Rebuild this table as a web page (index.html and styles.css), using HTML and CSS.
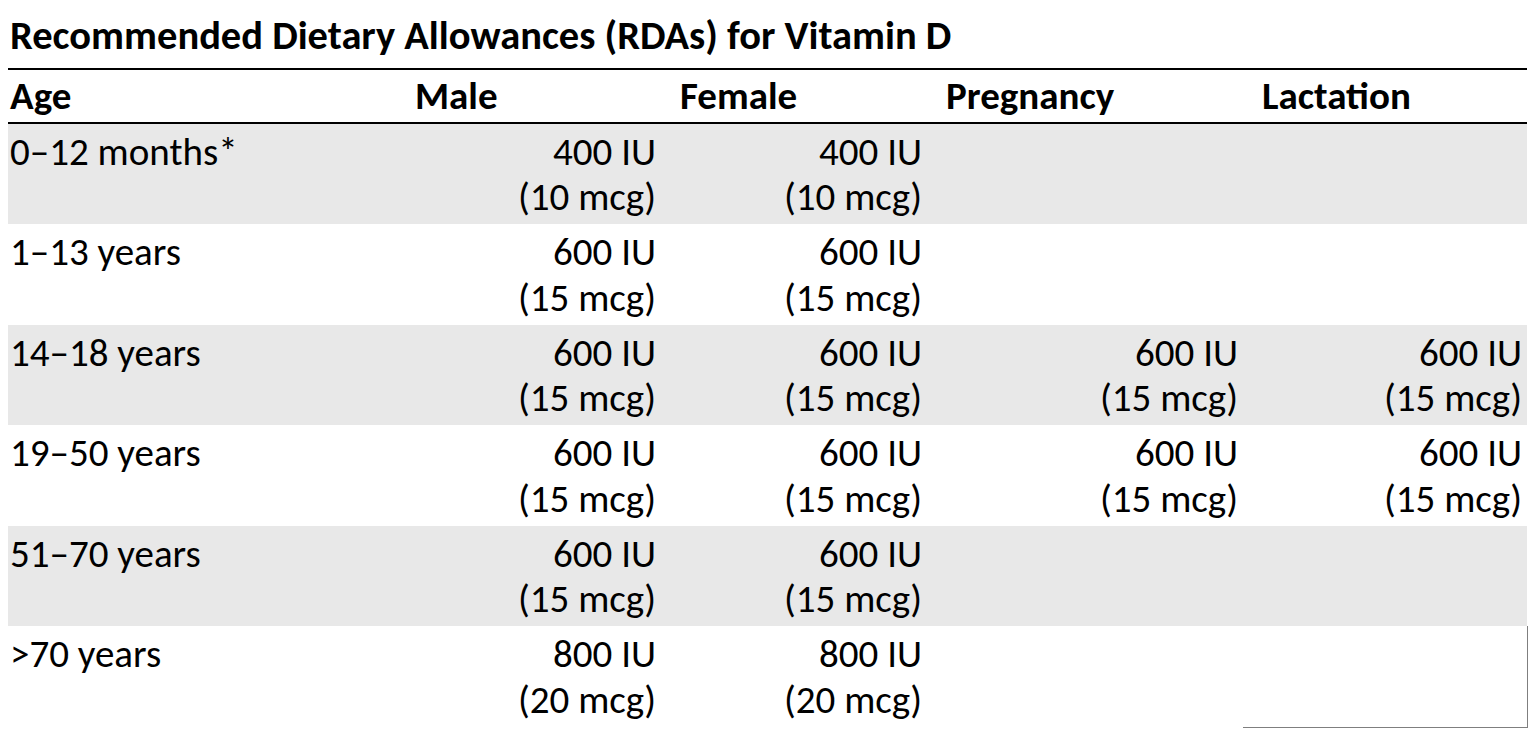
FILE: index.html
```html
<!DOCTYPE html>
<html lang="en">
<head>
<meta charset="utf-8">
<title>Recommended Dietary Allowances (RDAs) for Vitamin D</title>
<link rel="stylesheet" href="styles.css">
</head>
<body>
<div class="sheet">
  <div class="title">Recommended Dietary Allowances (RDAs) for Vitamin D</div>
  <table class="rda">
    <colgroup>
      <col class="c-age"><col class="c-male"><col class="c-female"><col class="c-preg"><col class="c-lact">
    </colgroup>
    <thead>
      <tr>
        <th class="first">Age</th>
        <th>Male</th>
        <th>Female</th>
        <th>Pregnancy</th>
        <th>Lactation</th>
      </tr>
    </thead>
    <tbody>
      <tr class="shade">
        <td class="first">0–12 months*</td>
        <td>400 IU<br>(10 mcg)</td>
        <td>400 IU<br>(10 mcg)</td>
        <td></td>
        <td></td>
      </tr>
      <tr>
        <td class="first">1–13 years</td>
        <td>600 IU<br>(15 mcg)</td>
        <td>600 IU<br>(15 mcg)</td>
        <td></td>
        <td></td>
      </tr>
      <tr class="shade">
        <td class="first">14–18 years</td>
        <td>600 IU<br>(15 mcg)</td>
        <td>600 IU<br>(15 mcg)</td>
        <td>600 IU<br>(15 mcg)</td>
        <td>600 IU<br>(15 mcg)</td>
      </tr>
      <tr>
        <td class="first">19–50 years</td>
        <td>600 IU<br>(15 mcg)</td>
        <td>600 IU<br>(15 mcg)</td>
        <td>600 IU<br>(15 mcg)</td>
        <td>600 IU<br>(15 mcg)</td>
      </tr>
      <tr class="shade">
        <td class="first">51–70 years</td>
        <td>600 IU<br>(15 mcg)</td>
        <td>600 IU<br>(15 mcg)</td>
        <td></td>
        <td></td>
      </tr>
      <tr>
        <td class="first">&gt;70 years</td>
        <td>800 IU<br>(20 mcg)</td>
        <td>800 IU<br>(20 mcg)</td>
        <td></td>
        <td class="boxed"></td>
      </tr>
    </tbody>
  </table>
</div>
</body>
</html>
```
FILE: styles.css
```css
html, body {
  margin: 0;
  padding: 0;
  background: #ffffff;
}

body {
  font-family: Carlito, Calibri, Lato, "Open Sans", sans-serif;
  color: #000000;
}

.sheet {
  padding: 13px 9px 0 8px;
}

.title {
  font-size: 40.5px;
  font-weight: 700;
  line-height: 45px;
  padding-left: 2px;
  height: 55px;
  white-space: nowrap;
}

.rda {
  width: 1519px;
  border-collapse: collapse;
  table-layout: fixed;
  font-size: 39px;
  line-height: 45.5px;
}

.c-age { width: 388px; }
.c-male { width: 265px; }
.c-female { width: 266px; }
.c-preg { width: 316px; }
.c-lact { width: 284px; }

.rda thead tr {
  border-top: 2px solid #000;
  border-bottom: 2px solid #000;
}

.rda th {
  font-weight: 700;
  text-align: left;
  padding: 3px 4px 3px 19px;
  vertical-align: top;
  white-space: nowrap;
}

.rda th.first,
.rda td.first {
  padding-left: 2px;
  text-align: left;
}

.rda td {
  text-align: right;
  padding: 5px 5px 4.5px 4px;
  height: 91px;
  vertical-align: top;
  white-space: nowrap;
}

.rda tr.shade td {
  background: #e8e8e8;
}

.rda td.boxed {
  border-right: 1px solid #7f7f7f;
  border-bottom: 1px solid #7f7f7f;
}
```
